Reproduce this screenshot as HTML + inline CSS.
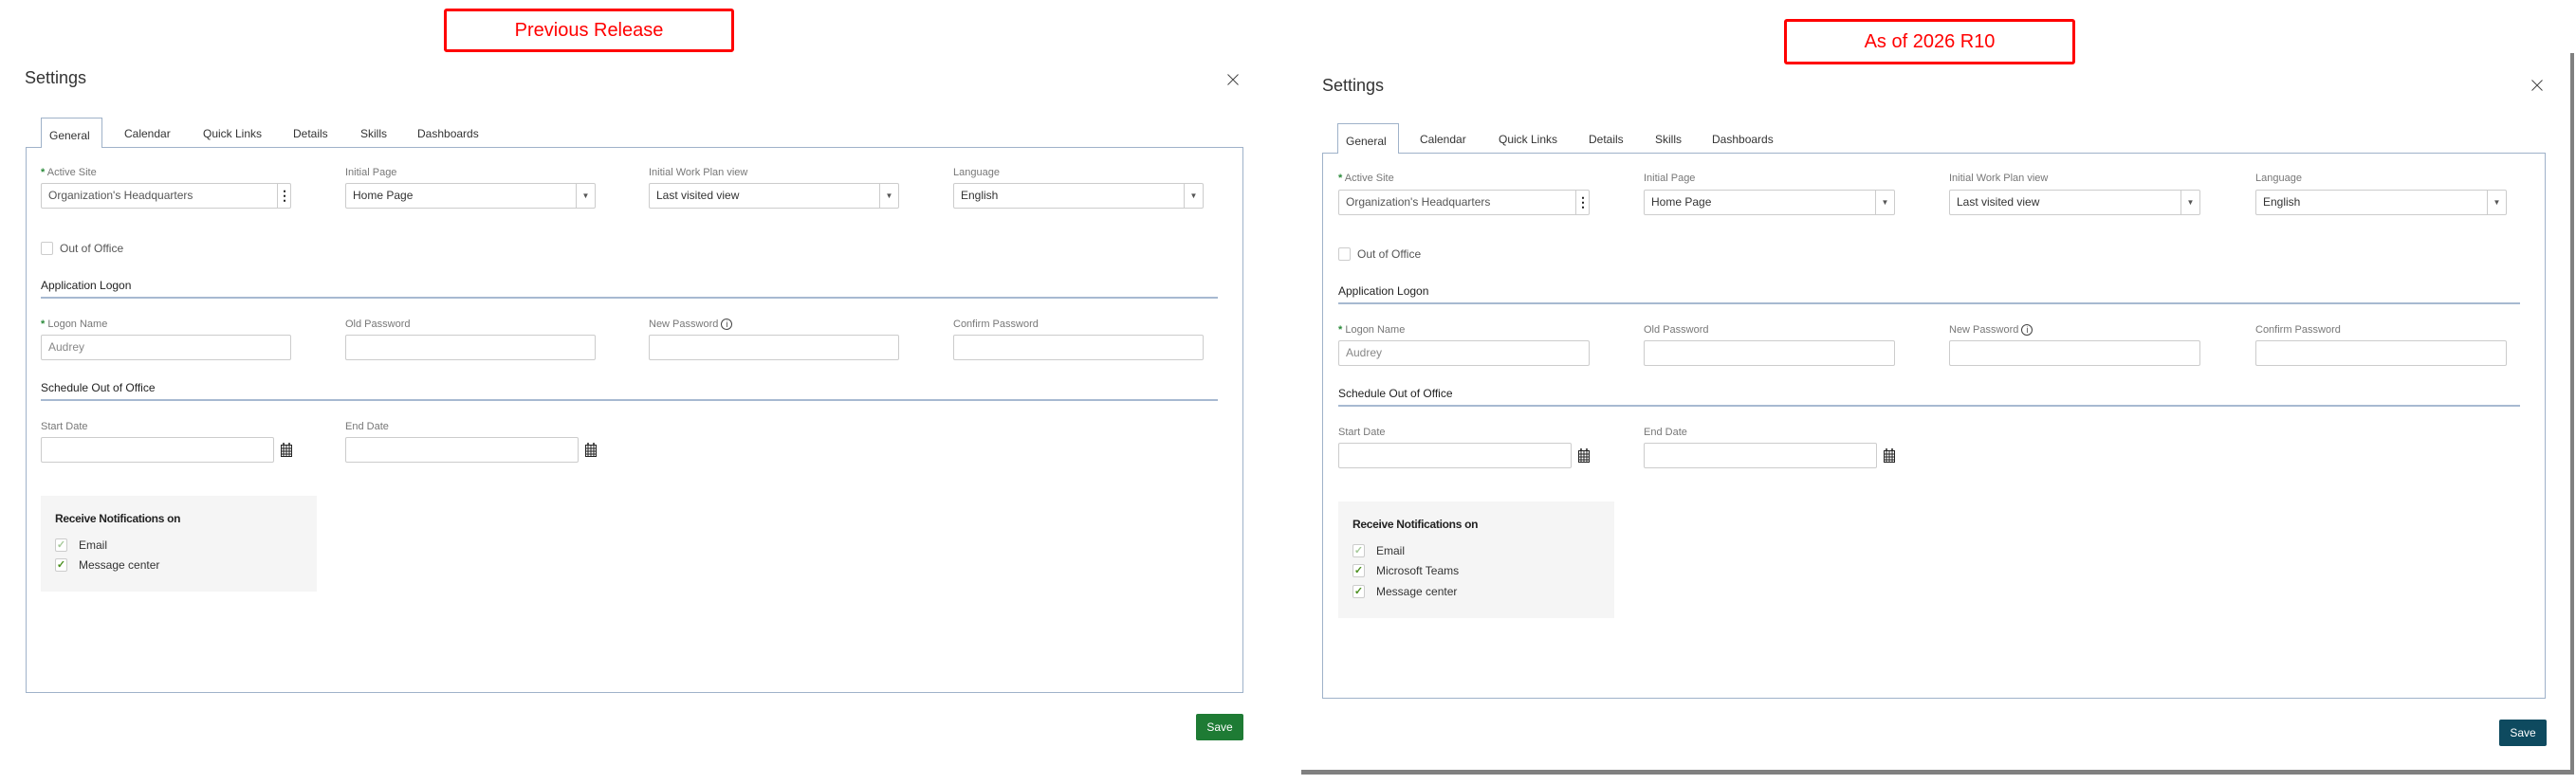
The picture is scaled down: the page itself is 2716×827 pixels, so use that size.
<!DOCTYPE html>
<html><head><meta charset="utf-8">
<style>
*{box-sizing:border-box;margin:0;padding:0}
body{width:2716px;height:827px;background:#fff;position:relative;overflow:hidden;font-family:"Liberation Sans",Arial,sans-serif;color:#333}
.abs{position:absolute}
.red{position:absolute;border:3px solid #f00;border-radius:3px;color:#f00;font-size:20px;display:flex;align-items:center;justify-content:center}
.c{position:absolute}
.ttl{position:absolute;font-size:18px;color:#333;line-height:20px}
.x{position:absolute}
.tab{position:absolute;font-size:12px;color:#333;top:10px;line-height:14px}
.gen{position:absolute;left:16px;top:0;width:65px;height:32px;border:1px solid #9fb2c9;border-bottom:none;background:#fff;z-index:2;font-size:12px;padding-top:11px;padding-left:8px;color:#333}
.panel{position:absolute;top:31px;left:0;border:1px solid #9fb2c9;height:576px}
.lbl{position:absolute;font-size:11px;color:#777;line-height:12px}
.lbl b{color:#2a8a3a;font-weight:bold}
.inp{position:absolute;height:27px;border:1px solid #ccc;border-radius:2px;background:#fff;font-size:12px;line-height:25px;padding-left:7px;color:#333}
.inp .dd{position:absolute;right:0;top:0;width:20px;height:25px;border-left:1px solid #ccc;font-size:8px;text-align:center;color:#555}
.sec{position:absolute;font-size:12px;color:#222;line-height:14px}
.line{position:absolute;height:2px;background:#a7b9d1}
.cb{position:absolute;width:13px;height:14px;border:1px solid #ccc;border-radius:2px;background:#fff;font-size:11px;line-height:12px;text-align:center;color:#4a8f1e;font-weight:bold}
.cbl{position:absolute;font-size:12px;color:#333;line-height:14px}
.nb{position:absolute;background:#f5f5f5}
.save{position:absolute;width:50px;height:28px;color:#fff;font-size:12px;text-align:center;line-height:28px;border-radius:2px}
</style></head><body>

<div class="red" style="left:468px;top:9px;width:306px;height:46px">Previous Release</div>
<div class="red" style="left:1881px;top:20px;width:307px;height:48px">As of 2026 R10</div>

<div class="abs" style="left:2710px;top:56px;width:4px;height:761px;background:#808080"></div>
<div class="abs" style="left:1372px;top:812px;width:1342px;height:5px;background:#808080"></div>

<!-- LEFT -->
<div class="c" style="left:27px;top:124px;width:1284px">
  <div class="ttl" style="left:-1px;top:-52px">Settings</div>
  <svg class="x" style="left:1267px;top:-46px" width="12" height="12" viewBox="0 0 12 12"><path d="M0.5 0.5L11.5 11.5M11.5 0.5L0.5 11.5" stroke="#444" stroke-width="1"/></svg>
  <div class="gen">General</div>
  <div class="tab" style="left:104px">Calendar</div>
  <div class="tab" style="left:187px">Quick Links</div>
  <div class="tab" style="left:282px">Details</div>
  <div class="tab" style="left:353px">Skills</div>
  <div class="tab" style="left:413px">Dashboards</div>
  <div class="panel" style="width:1284px"></div>

  <div class="lbl" style="left:16px;top:52px"><b>*</b> Active Site</div>
  <div class="lbl" style="left:337px;top:52px">Initial Page</div>
  <div class="lbl" style="left:657px;top:52px">Initial Work Plan view</div>
  <div class="lbl" style="left:978px;top:52px">Language</div>
  <div class="inp" style="left:16px;top:69px;width:264px;color:#555">Organization's Headquarters<span class="dd" style="font-size:14px;font-weight:bold;color:#222;width:14px">⋮</span></div>
  <div class="inp" style="left:337px;top:69px;width:264px">Home Page<span class="dd">▼</span></div>
  <div class="inp" style="left:657px;top:69px;width:264px">Last visited view<span class="dd">▼</span></div>
  <div class="inp" style="left:978px;top:69px;width:264px">English<span class="dd">▼</span></div>

  <div class="cb" style="left:16px;top:131px"></div>
  <div class="cbl" style="left:36px;top:131px;color:#555">Out of Office</div>

  <div class="sec" style="left:16px;top:170px">Application Logon</div>
  <div class="line" style="left:16px;top:189px;width:1241px"></div>

  <div class="lbl" style="left:16px;top:212px"><b>*</b> Logon Name</div>
  <div class="lbl" style="left:337px;top:212px">Old Password</div>
  <div class="lbl" style="left:657px;top:212px">New Password <span style="display:inline-block;width:12px;height:12px;border:1px solid #444;border-radius:50%;font-size:9px;line-height:10px;text-align:center;color:#444">i</span></div>
  <div class="lbl" style="left:978px;top:212px">Confirm Password</div>
  <div class="inp" style="left:16px;top:229px;width:264px;color:#888">Audrey</div>
  <div class="inp" style="left:337px;top:229px;width:264px"></div>
  <div class="inp" style="left:657px;top:229px;width:264px"></div>
  <div class="inp" style="left:978px;top:229px;width:264px"></div>

  <div class="sec" style="left:16px;top:278px">Schedule Out of Office</div>
  <div class="line" style="left:16px;top:297px;width:1241px"></div>
  <div class="lbl" style="left:16px;top:320px">Start Date</div>
  <div class="lbl" style="left:337px;top:320px">End Date</div>
  <div class="inp" style="left:16px;top:337px;width:246px"></div>
  <div class="inp" style="left:337px;top:337px;width:246px"></div>
  <svg class="abs" style="left:269px;top:343px" width="12" height="15" viewBox="0 0 12 15"><rect x="0.5" y="2.5" width="11" height="12" fill="#fff" stroke="#222"/><path d="M0 6h12M0 9h12M0 12h12M3 3v12M6 3v12M9 3v12" stroke="#222"/><path d="M3 0v3M9 0v3" stroke="#222" stroke-width="1.5"/></svg>
  <svg class="abs" style="left:590px;top:343px" width="12" height="15" viewBox="0 0 12 15"><rect x="0.5" y="2.5" width="11" height="12" fill="#fff" stroke="#222"/><path d="M0 6h12M0 9h12M0 12h12M3 3v12M6 3v12M9 3v12" stroke="#222"/><path d="M3 0v3M9 0v3" stroke="#222" stroke-width="1.5"/></svg>

  <div class="nb" style="left:16px;top:399px;width:291px;height:101px"></div>
  <div class="sec" style="left:31px;top:416px;font-weight:bold;font-size:12px;letter-spacing:-0.3px">Receive Notifications on</div>
  <div class="cb" style="left:31px;top:444px;color:#a6c99a">✓</div><div class="cbl" style="left:56px;top:444px">Email</div>
  <div class="cb" style="left:31px;top:465px">✓</div><div class="cbl" style="left:56px;top:465px">Message center</div>

  <div class="save" style="left:1234px;top:629px;background:#1e7b34">Save</div>
</div>

<!-- RIGHT -->
<div class="c" style="left:1394px;top:130px;width:1290px">
  <div class="ttl" style="left:0px;top:-50px">Settings</div>
  <svg class="x" style="left:1275px;top:-46px" width="12" height="12" viewBox="0 0 12 12"><path d="M0.5 0.5L11.5 11.5M11.5 0.5L0.5 11.5" stroke="#444" stroke-width="1"/></svg>
  <div class="gen">General</div>
  <div class="tab" style="left:103px">Calendar</div>
  <div class="tab" style="left:186px">Quick Links</div>
  <div class="tab" style="left:281px">Details</div>
  <div class="tab" style="left:351px">Skills</div>
  <div class="tab" style="left:411px">Dashboards</div>
  <div class="panel" style="width:1290px"></div>

  <div class="lbl" style="left:17px;top:52px"><b>*</b> Active Site</div>
  <div class="lbl" style="left:339px;top:52px">Initial Page</div>
  <div class="lbl" style="left:661px;top:52px">Initial Work Plan view</div>
  <div class="lbl" style="left:984px;top:52px">Language</div>
  <div class="inp" style="left:17px;top:70px;width:265px;color:#555">Organization's Headquarters<span class="dd" style="font-size:14px;font-weight:bold;color:#222;width:14px">⋮</span></div>
  <div class="inp" style="left:339px;top:70px;width:265px">Home Page<span class="dd">▼</span></div>
  <div class="inp" style="left:661px;top:70px;width:265px">Last visited view<span class="dd">▼</span></div>
  <div class="inp" style="left:984px;top:70px;width:265px">English<span class="dd">▼</span></div>

  <div class="cb" style="left:17px;top:131px"></div>
  <div class="cbl" style="left:37px;top:131px;color:#555">Out of Office</div>

  <div class="sec" style="left:17px;top:170px">Application Logon</div>
  <div class="line" style="left:17px;top:189px;width:1246px"></div>

  <div class="lbl" style="left:17px;top:212px"><b>*</b> Logon Name</div>
  <div class="lbl" style="left:339px;top:212px">Old Password</div>
  <div class="lbl" style="left:661px;top:212px">New Password <span style="display:inline-block;width:12px;height:12px;border:1px solid #444;border-radius:50%;font-size:9px;line-height:10px;text-align:center;color:#444">i</span></div>
  <div class="lbl" style="left:984px;top:212px">Confirm Password</div>
  <div class="inp" style="left:17px;top:229px;width:265px;color:#888">Audrey</div>
  <div class="inp" style="left:339px;top:229px;width:265px"></div>
  <div class="inp" style="left:661px;top:229px;width:265px"></div>
  <div class="inp" style="left:984px;top:229px;width:265px"></div>

  <div class="sec" style="left:17px;top:278px">Schedule Out of Office</div>
  <div class="line" style="left:17px;top:297px;width:1246px"></div>
  <div class="lbl" style="left:17px;top:320px">Start Date</div>
  <div class="lbl" style="left:339px;top:320px">End Date</div>
  <div class="inp" style="left:17px;top:337px;width:246px"></div>
  <div class="inp" style="left:339px;top:337px;width:246px"></div>
  <svg class="abs" style="left:270px;top:343px" width="12" height="15" viewBox="0 0 12 15"><rect x="0.5" y="2.5" width="11" height="12" fill="#fff" stroke="#222"/><path d="M0 6h12M0 9h12M0 12h12M3 3v12M6 3v12M9 3v12" stroke="#222"/><path d="M3 0v3M9 0v3" stroke="#222" stroke-width="1.5"/></svg>
  <svg class="abs" style="left:592px;top:343px" width="12" height="15" viewBox="0 0 12 15"><rect x="0.5" y="2.5" width="11" height="12" fill="#fff" stroke="#222"/><path d="M0 6h12M0 9h12M0 12h12M3 3v12M6 3v12M9 3v12" stroke="#222"/><path d="M3 0v3M9 0v3" stroke="#222" stroke-width="1.5"/></svg>

  <div class="nb" style="left:17px;top:399px;width:291px;height:123px"></div>
  <div class="sec" style="left:32px;top:416px;font-weight:bold;font-size:12px;letter-spacing:-0.3px">Receive Notifications on</div>
  <div class="cb" style="left:32px;top:444px;color:#a6c99a">✓</div><div class="cbl" style="left:57px;top:444px">Email</div>
  <div class="cb" style="left:32px;top:465px">✓</div><div class="cbl" style="left:57px;top:465px">Microsoft Teams</div>
  <div class="cb" style="left:32px;top:487px">✓</div><div class="cbl" style="left:57px;top:487px">Message center</div>

  <div class="save" style="left:1241px;top:629px;background:#0e4a5f">Save</div>
</div>

</body></html>
